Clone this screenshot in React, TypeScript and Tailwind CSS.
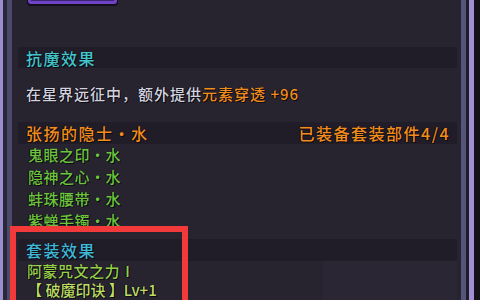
import React from 'react';

const shadow = '[text-shadow:1px_1px_0_#0d0b12,-1px_0_0_#0d0b12]';

const setParts = ['鬼眼之印・水', '隐神之心・水', '蚌珠腰带・水', '紫蝉手镯・水'];

function App() {
  return (
    <div
      className="relative w-[480px] h-[300px] overflow-hidden flex bg-[#141218]"
      style={{ fontFamily: '"Noto Sans CJK SC", "Noto Sans", sans-serif' }}
    >
      {/* left frame */}
      <div className="w-[3px] bg-[#9c8fd0]" />
      <div className="w-[4px] bg-[#2a2738]" />
      <div className="w-[5px] bg-[#4b4a68]" />

      {/* panel */}
      <div className="relative flex-1 bg-[#27232f] flex flex-col">
        <div className="absolute left-[16px] top-[-7px] w-[89px] h-[11px] rounded-b-[3px] border-[3px] border-[#7042c8] bg-[#3b2470] shadow-[0_1px_0_1px_#120e1c]" />

        <div className="mt-[47px] ml-[6px] mr-[4px] h-[21px] bg-[#201d29] flex items-center px-[8px]">
          <span className={`text-[16px] font-medium tracking-[1.5px] text-[#44c4cc] ${shadow}`}>抗魔效果</span>
        </div>

        <div className={`mt-[16px] pl-[14px] h-[20px] leading-[20px] text-[15px] font-medium tracking-[1px] text-[#d2d2de] ${shadow}`}>
          在星界远征中，额外提供<span className="text-[#f28c1a]">元素穿透 +96</span>
        </div>

        <div className="mt-[18px] ml-[6px] mr-[4px] h-[22px] bg-[#201d29] flex items-center justify-between px-[8px] pr-[7px]">
          <span className={`text-[16px] font-medium tracking-[1.5px] text-[#f28c1a] ${shadow}`}>张扬的隐士・水</span>
          <span className={`text-[16px] font-medium tracking-[1.5px] text-[#f28c1a] ${shadow}`}>已装备套装部件4/4</span>
        </div>

        <div className="flex flex-col pl-[16px]">
          {setParts.map((p) => (
            <div key={p} className={`h-[22px] leading-[22px] text-[15px] font-medium tracking-[0.5px] text-[#6cc43c] ${shadow}`}>
              {p}
            </div>
          ))}
        </div>

        <div className="mt-[7px] ml-[6px] mr-[4px] h-[22px] bg-[#201d29] flex items-center px-[8px]">
          <span className={`text-[16px] font-medium tracking-[1.5px] text-[#3fb8d8] ${shadow}`}>套装效果</span>
        </div>

        <div className="relative flex-1">
          <div className="absolute left-[311px] right-[4px] top-0 bottom-0 bg-[#2a2634]" />
          <div className="relative flex flex-col pl-[15px]">
            <div className={`h-[19px] leading-[19px] text-[15px] font-medium tracking-[0.5px] text-[#96cf48] ${shadow}`}>阿蒙咒文之力Ⅰ</div>
            <div className={`h-[19px] leading-[19px] text-[15px] font-medium text-[#bcdc62] ${shadow}`}>【 破魔印诀 】Lv+1</div>
            <div className={`h-[19px] leading-[19px] text-[15px] font-medium text-[#bcdc62] ${shadow}`}>【 深渊之魂 】Lv+1</div>
          </div>
        </div>
      </div>

      {/* right frame */}
      <div className="w-[5px] bg-[#55547a]" />
      <div className="w-[3px] bg-[#1e1c26]" />
      <div className="w-[5px] bg-[#a090d2]" />
      <div className="w-[6px] bg-[#141218]" />

      {/* red annotation box */}
      <div className="absolute left-[10px] top-[226px] w-[178px] h-[90px] border-[6px] border-[#f23a3a]" />
    </div>
  );
}

export default App;
